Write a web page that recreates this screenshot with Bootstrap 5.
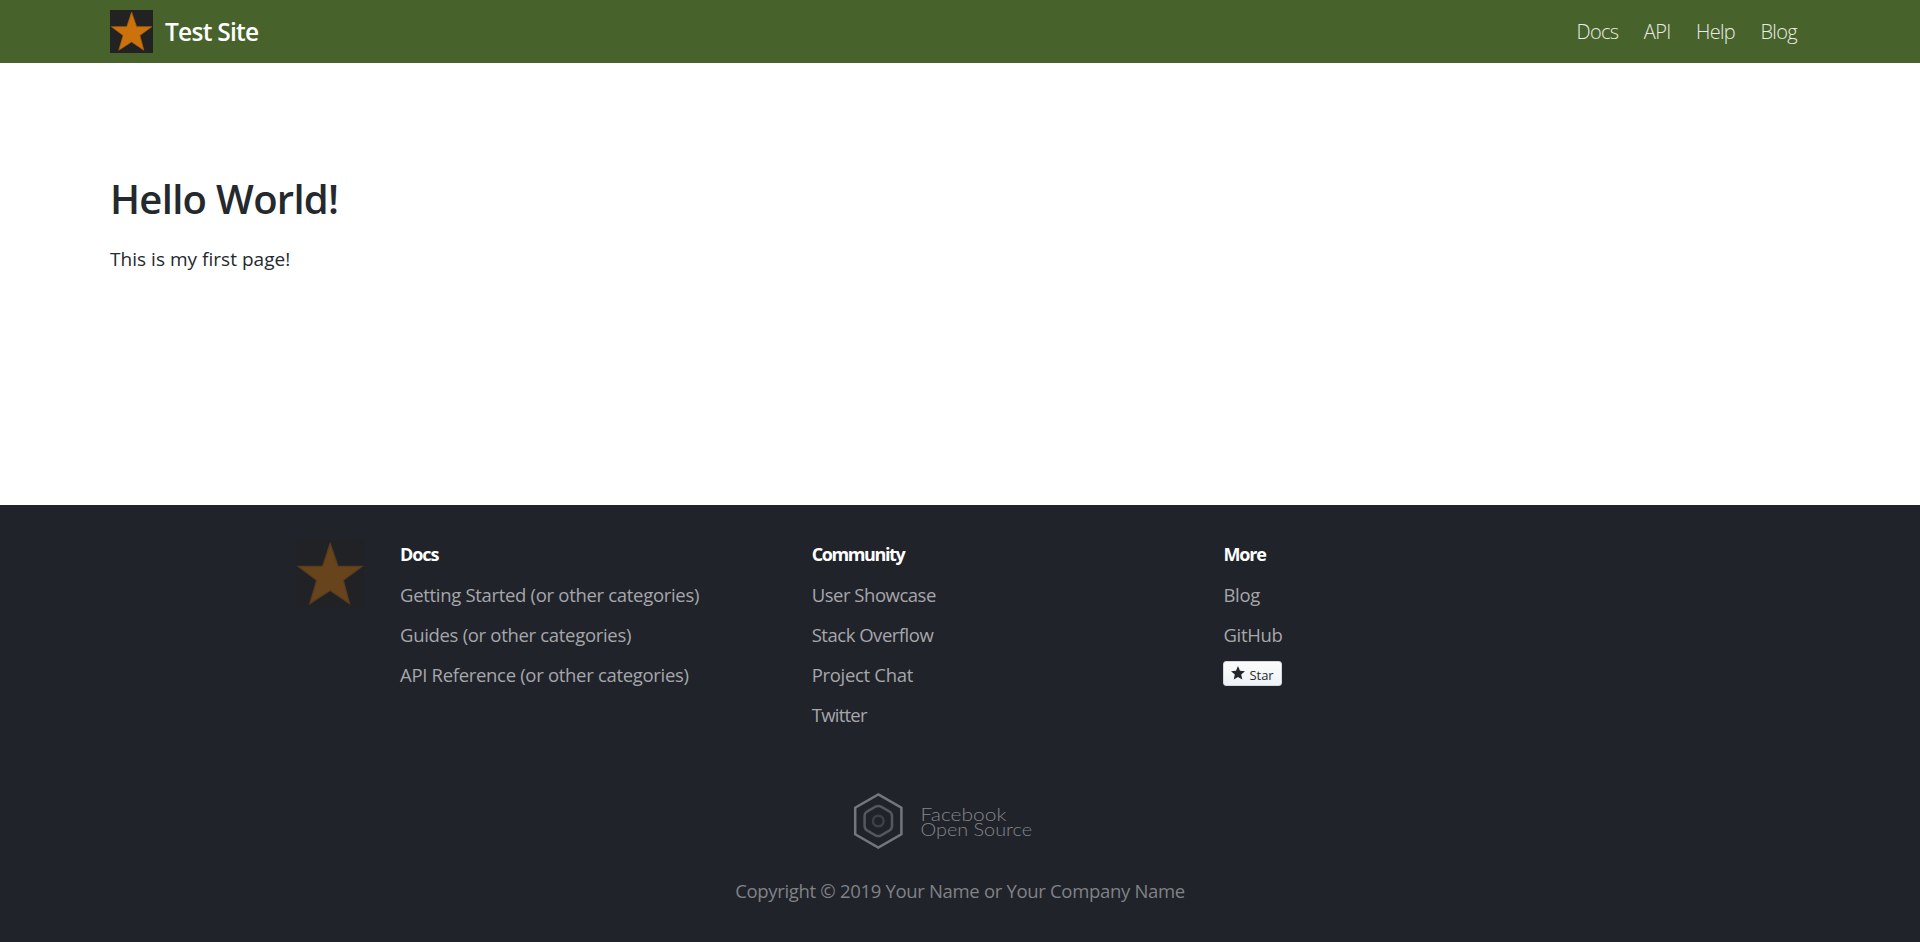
<!DOCTYPE html>
<html lang="en">
<head>
<meta charset="utf-8">
<meta name="viewport" content="width=device-width, initial-scale=1">
<title>Test Site</title>
<link href="https://cdn.jsdelivr.net/npm/bootstrap@5.3.0/dist/css/bootstrap.min.css" rel="stylesheet">
<style>
  body { font-family: "Open Sans", "Noto Sans", sans-serif; color: #24292e; min-height: 942px; }
  .site-wrap { width: 100%; max-width: 1700px; margin: 0 auto; }
  .site-header { height: 63px; background: #48622c; }
  .site-logo { width: 43px; height: 43px; }
  .site-name { font-size: 24.5px; font-weight: 600; letter-spacing: -.75px; color: #fff; margin: 2px 0 0 12px; }
  .site-nav { gap: 25.3px; padding-right: 13px; }
  .site-nav .nav-link { font-size: 20px; font-weight: 300; letter-spacing: -.65px; line-height: 30px; color: #e8ede4; padding: 0; }
  .site-main { height: 442px; padding-top: 112px; }
  .site-main h1 { font-size: 40px; font-weight: 600; line-height: 48px; letter-spacing: -.7px; margin: 0 0 21px; }
  .site-main p { font-size: 19px; line-height: 30px; letter-spacing: .03px; margin: 0; }
  .site-footer { height: 437px; background: #20232a; padding-top: 29px; }
  .footer-logo { width: 68px; height: 68px; margin: 6px 36px 0 296px; opacity: .42; }
  .footer-col { width: 411.7px; }
  .footer-col h5 { font-size: 18px; font-weight: 700; line-height: 40px; letter-spacing: -1.1px; color: #fff; margin: 0 0 1px; }
  .footer-col .h-tight { letter-spacing: -1.4px; }
  .footer-col a { display: block; width: max-content; font-size: 18.5px; line-height: 40px; letter-spacing: -.31px; color: #a6a7aa; text-decoration: none; }
  .footer-col .snug { letter-spacing: -.48px; }
  .footer-col .snugger { letter-spacing: -.75px; }
  .footer-col .star-btn { display: flex; align-items: center; width: 59px; height: 25px; margin-top: 6px; padding: 3px 0 0 7px; font-size: 13px; line-height: 22px; letter-spacing: 0; color: #24292e; border: 1px solid #d5d8dc; border-radius: 3px; background: linear-gradient(#fcfcfc, #eef2f6); }
  .fb-logo { display: block; margin: 57px auto 0 853px; }
  .copyright { font-size: 18.5px; line-height: 40px; letter-spacing: -.32px; color: #808286; margin-top: 19px; }
</style>
</head>
<body>
<svg width="0" height="0" class="position-absolute">
  <symbol id="star-logo" viewBox="0 0 43 43">
    <rect width="43" height="43" fill="#222"/>
    <path d="M21.6 2.2 26.6 16.7H41.8L29.9 25.4 33.8 40.2 21.6 31.9 8.8 40.2 13.1 25.4 1.4 16.7H16.8Z" fill="#cb720c" stroke="#a95e0c" stroke-width=".8"/>
  </symbol>
</svg>

<header class="site-header d-flex">
  <div class="site-wrap d-flex align-items-center justify-content-between">
    <a href="#" class="d-flex align-items-center text-decoration-none">
      <svg class="site-logo"><use href="#star-logo"/></svg>
      <span class="site-name">Test Site</span>
    </a>
    <nav class="nav site-nav">
      <a class="nav-link" href="#">Docs</a>
      <a class="nav-link" href="#">API</a>
      <a class="nav-link" href="#">Help</a>
      <a class="nav-link" href="#">Blog</a>
    </nav>
  </div>
</header>

<main class="site-main">
  <div class="site-wrap">
    <h1>Hello World!</h1>
    <p>This is my first page!</p>
  </div>
</main>

<footer class="site-footer">
  <section class="d-flex align-items-start">
    <svg class="footer-logo flex-shrink-0"><use href="#star-logo"/></svg>
    <div class="footer-col">
      <h5>Docs</h5>
      <a href="#">Getting Started (or other categories)</a>
      <a href="#">Guides (or other categories)</a>
      <a href="#">API Reference (or other categories)</a>
    </div>
    <div class="footer-col">
      <h5 class="h-tight">Community</h5>
      <a href="#" class="snug">User Showcase</a>
      <a href="#" class="snug">Stack Overflow</a>
      <a href="#">Project Chat</a>
      <a href="#" class="snugger">Twitter</a>
    </div>
    <div class="footer-col">
      <h5>More</h5>
      <a href="#">Blog</a>
      <a href="#">GitHub</a>
      <a href="#" class="star-btn">
        <svg width="14" height="14" viewBox="0 0 14 14" class="me-1 mb-1"><path d="M7 0 9 4.7 14 5.2 10.2 8.6 11.3 13.6 7 11 2.7 13.6 3.8 8.6 0 5.2 5 4.7Z" fill="#20262b"/></svg>
        Star
      </a>
    </div>
  </section>

  <svg class="fb-logo" width="182" height="60" viewBox="0 0 182 60" fill="none">
    <path d="M25.3 2.4 48.4 15.7V42.3L25.3 55.6 2.2 42.3V15.7Z" stroke="#73767b" stroke-width="2.5"/>
    <path d="M22.5 14.7Q25.3 13.2 28.1 14.7L36.2 19.3Q39 21 39 24V34Q39 37 36.2 38.7L28.1 43.3Q25.3 44.8 22.5 43.3L14.4 38.7Q11.6 37 11.6 34V24Q11.6 21 14.4 19.3Z" stroke="#54575d" stroke-width="2.5"/>
    <circle cx="25.3" cy="29" r="5.3" stroke="#3d4047" stroke-width="2.5"/>
    <g fill="#83868b" font-family="Lato, sans-serif" font-weight="300" font-size="18">
      <text x="67.5" y="28.500" textLength="86" lengthAdjust="spacingAndGlyphs">Facebook</text>
      <text x="67.5" y="43.500" textLength="111.500" lengthAdjust="spacingAndGlyphs">Open Source</text>
    </g>
  </svg>

  <div class="copyright text-center">Copyright © 2019 Your Name or Your Company Name</div>
</footer>
<script src="https://cdn.jsdelivr.net/npm/bootstrap@5.3.0/dist/js/bootstrap.bundle.min.js"></script>
</body>
</html>
